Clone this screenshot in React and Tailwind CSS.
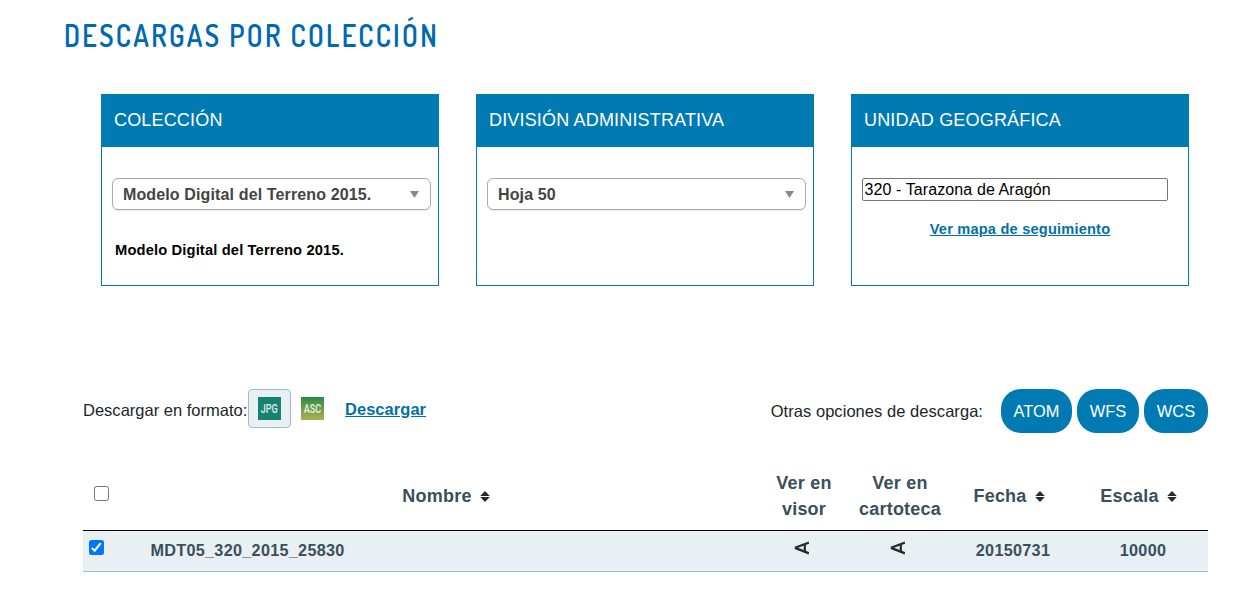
const SortIcon = () => (
  <svg className="ml-[8px] h-[11px] w-[10px] shrink-0 fill-[#222c32]" viewBox="0 0 10 11">
    <path d="M5 0 9.8 4.9H.2ZM.2 6.1h9.6L5 11Z" />
  </svg>
);

const ViewIcon = () => (
  <svg className="h-[14px] w-[15px]" viewBox="0 0 15 14" fill="none" stroke="#2b2b2b">
    <path d="M15 1.6 1 6.8" strokeWidth="2.1" />
    <path d="M1 6.8 15 12.4" strokeWidth="2.5" />
    <path d="M10.8 3.2v7.6" strokeWidth="2.2" />
  </svg>
);

const Panel = ({ title, children }) => (
  <section className="h-[192px] w-[338px] border border-[#007ab3]">
    <h2 className="flex h-[52px] items-center bg-[#007ab3] pl-3 pb-[2px] text-[18px] tracking-[0.17px] text-white">
      {title}
    </h2>
    <div className="flex flex-col px-[10px] pt-[31px]">{children}</div>
  </section>
);

const SelectBox = ({ value }) => (
  <div className="flex h-8 w-[319px] items-center justify-between rounded-[6px] border border-[#aaa] pl-[10px] pr-[11px] text-[16px] font-bold tracking-[0.13px] text-[#444] shadow-[0_1px_1px_rgba(0,0,0,0.1)]">
    <span className="pt-px">{value}</span>
    <svg className="h-[7px] w-[9px] fill-[#888]" viewBox="0 0 9 7">
      <path d="M0 0h9L4.5 7Z" />
    </svg>
  </div>
);

const Pill = ({ children, width }) => (
  <button className={`h-11 rounded-[20px] bg-[#007ab3] pt-px text-center text-[16.4px] tracking-[0.05px] text-white ${width}`}>{children}</button>
);

const Check = ({ checked }) => (
  <span
    role="checkbox"
    aria-checked={checked}
    className={
      checked
        ? "flex h-[15px] w-[15px] items-center justify-center rounded-[2.5px] bg-[#0075ff]"
        : "flex h-[15px] w-[15px] rounded-[2.5px] border border-[#767676] bg-white"
    }
  >
    {checked && (
      <svg className="h-[13px] w-[13px]" viewBox="0 0 13 13" fill="none" stroke="white" strokeWidth="2.1">
        <path d="m1.9 6.9 2.8 2.8 6-7.6" />
      </svg>
    )}
  </span>
);

const columns = "grid grid-cols-[37px_652px_64px_128px_90px_154px]";

export default function App() {
  return (
    <main className="h-[598px] w-[1255px] overflow-hidden bg-white font-['Liberation_Sans',Arial,sans-serif] text-[16px] tracking-[0.32px] text-[#212529]">
      <h1 className="ml-[64px] h-[94px] w-[600px] origin-left scale-x-[0.93] pt-[14px] font-['Dosis',Roboto,sans-serif] text-[30px] leading-[42px] font-semibold tracking-[2.5px] whitespace-nowrap text-[#0069b4]">
        DESCARGAS POR COLECCIÓN
      </h1>

      <div className="ml-[101px] flex gap-[37px]">
        <Panel title="COLECCIÓN">
          <SelectBox value="Modelo Digital del Terreno 2015." />
          <p className="mt-[30px] pl-[3px] text-[14.7px] leading-5 font-bold tracking-[0.15px] text-black">
            Modelo Digital del Terreno 2015.
          </p>
        </Panel>
        <Panel title="DIVISIÓN ADMINISTRATIVA">
          <SelectBox value="Hoja 50" />
        </Panel>
        <Panel title="UNIDAD GEOGRÁFICA">
          <div className="flex h-[23px] w-[306px] items-center rounded-[2px] border border-[#767676] px-[1.5px] tracking-[0.1px] text-black">
            320 - Tarazona de Aragón
          </div>
          <a className="mt-[18px] self-center text-[14.6px] leading-5 font-bold tracking-[0.2px] text-[#0071a8] underline">
            Ver mapa de seguimiento
          </a>
        </Panel>
      </div>

      <div className="mt-[103px] ml-[83px] flex h-11 w-[1125px] items-start">
        <span className="mt-[9px] w-[165px] text-[16.5px] tracking-[0.01px] whitespace-nowrap">Descargar en formato:</span>
        <span className="flex h-[39px] w-[43px] items-center justify-center rounded-[4px] border border-[#9fbccc] bg-[#e8f0f4]">
          <span className="flex h-[23px] w-[23px] items-center justify-center bg-[#168372] text-white">
            <span className="scale-x-[0.7] font-['Roboto',sans-serif] text-[13px] font-medium tracking-normal opacity-85">JPG</span>
          </span>
        </span>
        <span className="mt-2 ml-[10px] flex h-[23px] w-[23px] items-center justify-center bg-linear-to-b from-[#23894a] to-[#a9b14b] text-white">
          <span className="scale-x-[0.7] font-['Roboto',sans-serif] text-[13px] font-medium tracking-normal opacity-85">ASC</span>
        </span>
        <a className="mt-2 ml-[21px] text-[16.4px] font-bold tracking-[0.1px] text-[#0071a8] underline">Descargar</a>
        <div className="ml-auto flex items-center gap-[5px]">
          <span className="mt-px mr-[13px] text-[16.5px] tracking-[0.05px]">Otras opciones de descarga:</span>
          <Pill width="w-[71px]">ATOM</Pill>
          <Pill width="w-[62px]">WFS</Pill>
          <Pill width="w-[64px]">WCS</Pill>
        </div>
      </div>

      <div className="mt-[31px] ml-[83px] w-[1125px] font-bold text-[#3a4f5c]">
        <div className={`${columns} h-[67px] items-center border-b border-black pb-[2px] text-[18px] leading-[26px] tracking-[0.22px]`}>
          <span className="mb-[5px] ml-[11px]"><Check checked={false} /></span>
          <span className="flex items-center justify-center">Nombre<SortIcon /></span>
          <span className="-mx-2 text-center">Ver en<br />visor</span>
          <span className="text-center">Ver en<br />cartoteca</span>
          <span className="flex items-center justify-center">Fecha<SortIcon /></span>
          <span className="ml-[15px] flex items-center justify-center">Escala<SortIcon /></span>
        </div>
        <div className={`${columns} h-[41px] items-center border-b border-[#9fbccc] bg-[#e8f0f4] pb-px text-[16.2px] tracking-[0.3px]`}>
          <span className="mb-[6px] ml-[6px]"><Check checked /></span>
          <span className="ml-[30.5px]">MDT05_320_2015_25830</span>
          <span className="mr-[5px] mb-[5px] flex justify-center"><ViewIcon /></span>
          <span className="mr-[5px] mb-[5px] flex justify-center"><ViewIcon /></span>
          <span className="ml-[8px] text-center">20150731</span>
          <span className="ml-[24px] text-center">10000</span>
        </div>
      </div>
    </main>
  );
}
